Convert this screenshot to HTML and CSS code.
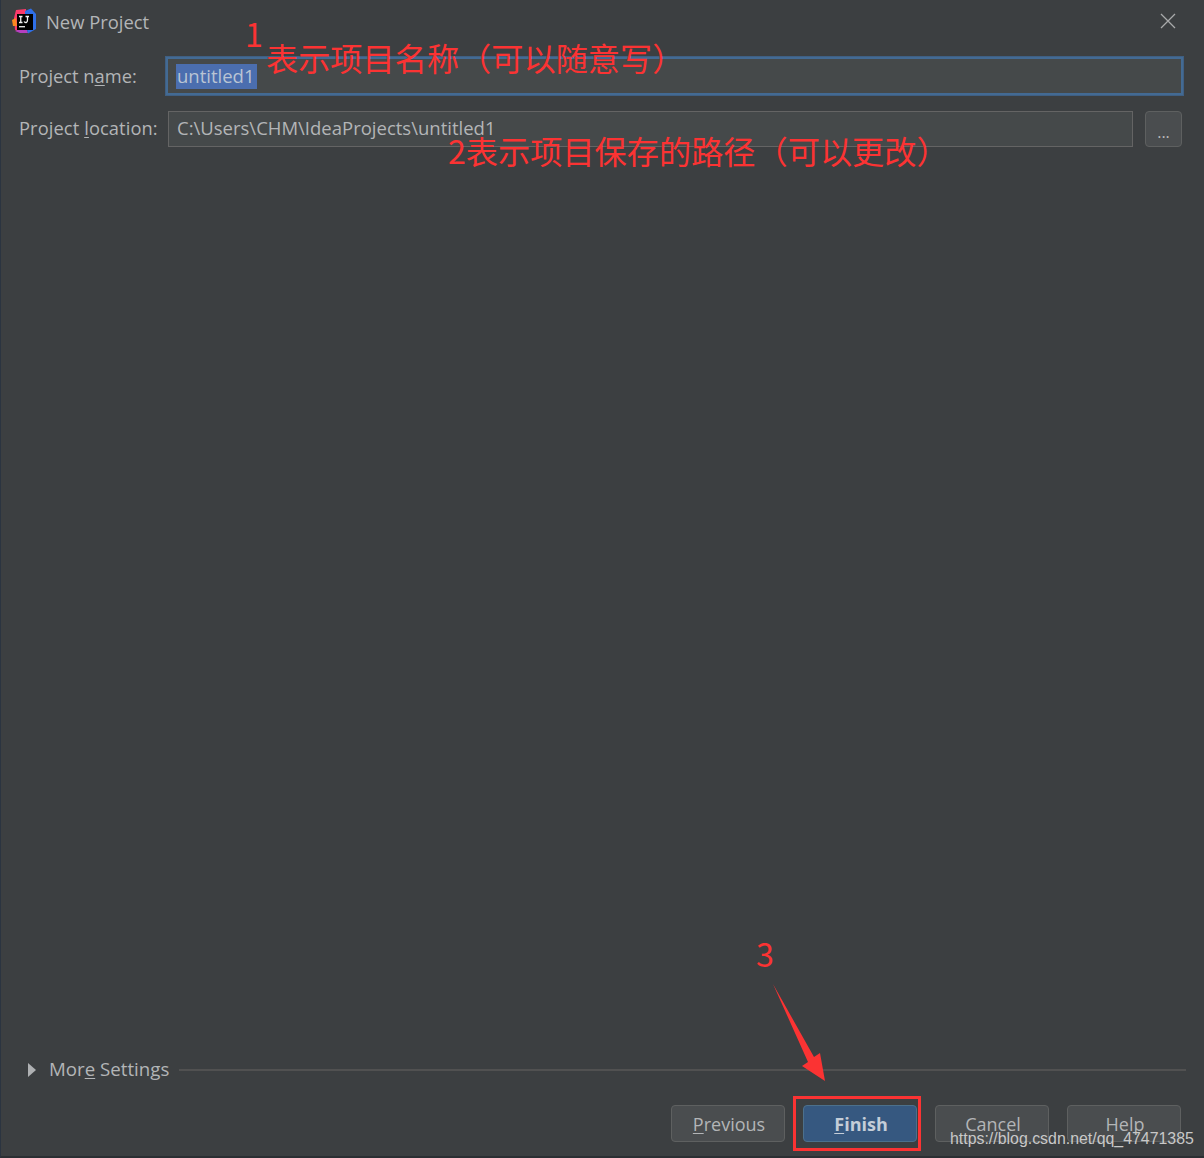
FILE: index.html
```html
<!DOCTYPE html>
<html lang="zh">
<head>
<meta charset="utf-8">
<title>New Project</title>
<link rel="stylesheet" href="styles.css">
</head>
<body>
<div class="dialog">
  <header class="titlebar">
    <svg class="logo" width="26" height="26" viewBox="0 0 26 26">
      <path d="M3 10 L5 2 L15 1 L15 13 L9 24 L4 22 Z" fill="#fc3a6b"/>
      <path d="M1 12 L5 10 L6 18 L2 18 Z" fill="#fd8a20"/>
      <path d="M4 23 L9 25 L17 25 L15 19 Z" fill="#b53fc0"/>
      <path d="M14 3 L20 0.500 L25 6 L25 21 L17 25.500 L14 14 Z" fill="#2f6fe8"/>
      <rect x="6" y="6" width="16" height="16" fill="#000"/>
      <path d="M8 8.500 H11.500 M9.750 8.500 V14.500 M8 14.500 H11.500 M13 13.500 Q14 15 15.500 14.300 Q16.500 13.800 16.500 12 V8.500 M14.500 8.500 H18" fill="none" stroke="#f2f2f2" stroke-width="1.300"/>
      <rect x="8" y="18" width="6" height="1.400" fill="#e0e0e0"/>
    </svg>
    <span class="title">New Project</span>
    <svg class="close" width="16" height="16" viewBox="0 0 16 16">
      <path d="M1 1 L15 15 M15 1 L1 15" fill="none" stroke="#a9aaab" stroke-width="1.300"/>
    </svg>
  </header>

  <div class="form">
    <div class="row row-name">
      <label class="label label-name">Project n<u>a</u>me:</label>
      <div class="field field-focus"><span class="selected">untitled1</span></div>
    </div>
    <div class="row row-location">
      <label class="label label-location">Project <u>l</u>ocation:</label>
      <div class="field field-plain">C:\Users\CHM\IdeaProjects\untitled1</div>
      <button class="browse">...</button>
    </div>
  </div>

  <div class="more">
    <svg class="caret" width="8" height="14" viewBox="0 0 8 14"><path d="M0 0 L8 7 L0 14 Z" fill="#afb1b3"/></svg>
    <span class="more-label">Mor<u>e</u> Settings</span>
    <span class="more-line"></span>
  </div>

  <footer class="buttons">
    <button class="btn"><u>P</u>revious</button>
    <button class="btn btn-primary"><u>F</u>inish</button>
    <button class="btn">Cancel</button>
    <button class="btn">Help</button>
  </footer>
</div>

<div class="note note-1">1</div>
<div class="note note-1-text">表示项目名称（可以随意写）</div>
<div class="note note-2">2表示项目保存的路径（可以更改）</div>
<div class="note note-3">3</div>
<svg class="arrow" width="60" height="104" viewBox="0 0 60 104">
  <path d="M1 1 L42 74 L48 70 L53 98 L30 83 L36 79 Z" fill="#fb3333"/>
</svg>
<div class="finish-box"></div>
<div class="watermark">https://blog.csdn.net/qq_47471385</div>
</body>
</html>
```

FILE: styles.css
```css
html, body {
  margin: 0;
  padding: 0;
  background: #3c3f41;
}

body {
  position: relative;
  width: 1204px;
  height: 1158px;
  overflow: hidden;
  font-family: "Open Sans", "Noto Sans", sans-serif;
  color: #b3b5b7;
}

u {
  text-underline-offset: 2px;
}

.dialog {
  box-sizing: border-box;
  width: 1204px;
  height: 1158px;
  display: flex;
  flex-direction: column;
  background: #3c3f41;
  border-left: 1px solid #2b3440;
  border-bottom: 2px solid #2b2f33;
}

.titlebar {
  height: 45px;
  display: flex;
  align-items: center;
  padding: 0 28px 0 10px;
  flex: none;
}

.logo {
  flex: none;
  margin-right: 9px;
  margin-top: -4px;
}

.title {
  font-size: 18.4px;
  flex: 1;
  margin-top: -3px;
}

.close {
  flex: none;
  margin-top: -3px;
}

.form {
  flex: 1;
  display: flex;
  flex-direction: column;
  padding: 11px 20px 0 18px;
  gap: 15px;
}

.row {
  display: flex;
  align-items: center;
}

.label {
  font-size: 18.3px;
  flex: none;
  width: 146px;
}

.label-name {
  padding-bottom: 2px;
}

.label-location {
  padding-bottom: 4px;
  letter-spacing: 0.1px;
}

.field {
  box-sizing: border-box;
  display: flex;
  align-items: center;
  background: #45494a;
  font-size: 18.5px;
}

.field-focus {
  flex: 1;
  height: 40px;
  border: 3px solid #436a93;
  outline: 1px solid #3f5f82;
  outline-offset: -1px;
  padding-left: 8px;
}

.selected {
  background: #4b6eaf;
  color: #b9c4d4;
  padding: 0 2px 0 1px;
  height: 25px;
  line-height: 24px;
}

.row-name {
  height: 40px;
}

.row-location {
  height: 36px;
}

.field-plain {
  width: 965px;
  height: 36px;
  margin-left: 3px;
  border: 1px solid #646464;
  padding: 0 0 4px 8px;
  flex: none;
}

.browse {
  box-sizing: border-box;
  width: 37px;
  height: 36px;
  margin-left: 12px;
  flex: none;
  background: #4a4d4f;
  border: 1px solid #5e6060;
  border-radius: 4px;
  color: #bbbbbb;
  font: 16px "Open Sans", sans-serif;
  padding: 6px 0 0;
}

.more {
  display: flex;
  align-items: center;
  height: 24px;
  padding: 0 18px 0 27px;
  flex: none;
}

.caret {
  flex: none;
  margin-right: 13px;
}

.more-label {
  font-size: 18.7px;
  flex: none;
  margin-top: -4px;
}

.more-line {
  flex: 1;
  height: 2px;
  margin-left: 10px;
  background: #515151;
}

.buttons {
  display: flex;
  justify-content: flex-end;
  gap: 18px;
  padding: 23px 23px 14px 0;
  flex: none;
}

.btn {
  box-sizing: border-box;
  width: 114px;
  height: 37px;
  background: #4a4d4f;
  border: 1px solid #5e6060;
  border-radius: 4px;
  color: #b3b5b7;
  font: 18px "Open Sans", sans-serif;
  padding: 0 0 0 2px;
}

.btn-primary {
  background: #365880;
  border-color: #4c708c;
  color: #c4cdd8;
  font-weight: 700;
}

.note {
  position: absolute;
  color: #fb3333;
  font-family: "Noto Sans CJK SC", sans-serif;
  font-size: 32.2px;
  line-height: 40px;
  white-space: nowrap;
}

.note-1 {
  left: 245px;
  top: 13px;
}

.note-1-text {
  left: 266px;
  top: 37px;
}

.note-2 {
  left: 448px;
  top: 130px;
}

.note-3 {
  left: 756px;
  top: 933px;
}

.arrow {
  position: absolute;
  left: 772px;
  top: 983px;
}

.finish-box {
  position: absolute;
  left: 793px;
  top: 1096px;
  box-sizing: border-box;
  width: 128px;
  height: 55px;
  border: 3px solid #fb3333;
}

.watermark {
  position: absolute;
  left: 950px;
  top: 1130px;
  font-family: "Liberation Sans", sans-serif;
  font-size: 15.9px;
  line-height: 18px;
  color: #c8c8c8;
  white-space: nowrap;
}
```
